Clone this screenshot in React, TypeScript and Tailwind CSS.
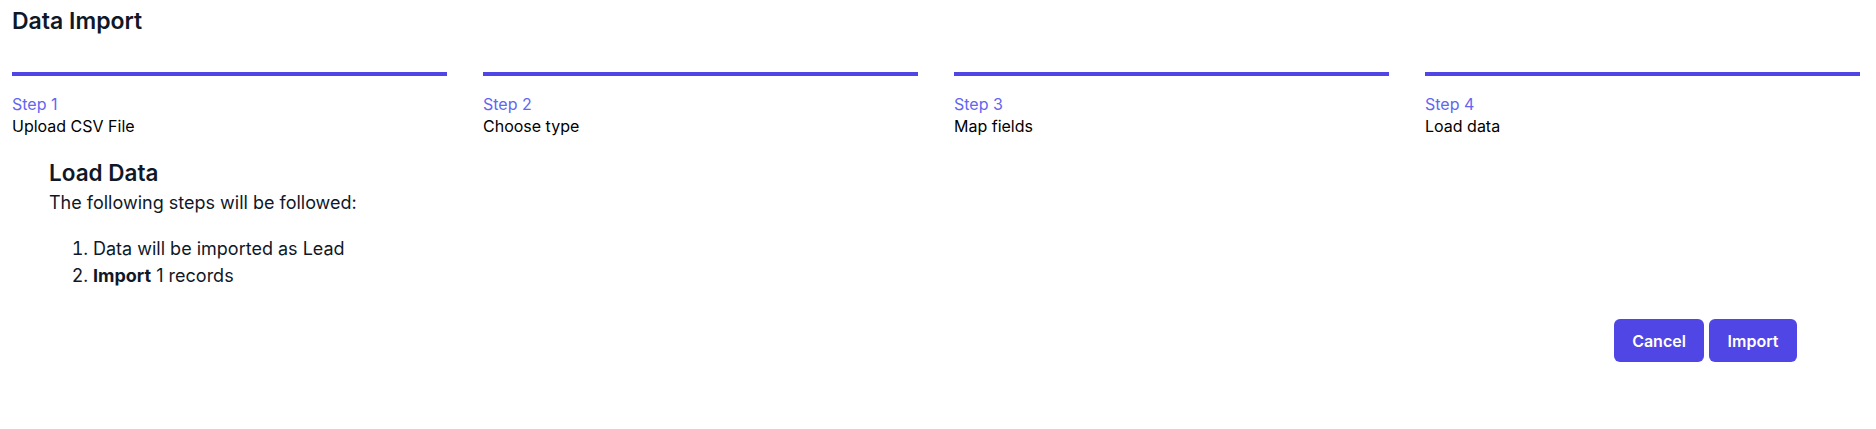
import React from "react";

const steps = [
  { n: "Step 1", label: "Upload CSV File" },
  { n: "Step 2", label: "Choose type" },
  { n: "Step 3", label: "Map fields" },
  { n: "Step 4", label: "Load data" },
];

export default function App() {
  return (
    <div className="w-[1876px] h-[429px] bg-white text-black" style={{ fontFamily: "Inter, 'Noto Sans', sans-serif" }}>
      <div className="pl-3 pr-4">
        <h1 className="pt-[7px] text-[23px] leading-7 font-semibold text-gray-900">Data Import</h1>
        <div className="mt-[37px] flex gap-9">
          {steps.map((s) => (
            <div key={s.n} className="flex-1">
              <div className="h-1 bg-[#4f46e5]" />
              <div className="mt-[17px] text-base leading-[22px] text-[#6366f1]">{s.n}</div>
              <div className="text-base leading-[22px] text-black">{s.label}</div>
            </div>
          ))}
        </div>
        <div className="pl-[37px] mt-[22px]">
          <h2 className="text-[22.5px] leading-7 font-semibold text-gray-900">Load Data</h2>
          <p className="mt-0.5 text-lg leading-7 text-gray-900">The following steps will be followed:</p>
          <ol className="mt-[18px] list-decimal pl-11 text-lg leading-[27px] text-gray-900">
            <li>Data will be imported as Lead</li>
            <li>
              <span className="font-bold">Import</span> 1 records
            </li>
          </ol>
        </div>
        <div className="mt-[30px] flex justify-end gap-[5px] pr-[63px]">
          <button className="h-[43px] w-[90px] rounded-md bg-[#4f46e5] text-base font-semibold text-white">Cancel</button>
          <button className="h-[43px] w-[88px] rounded-md bg-[#4f46e5] text-base font-semibold text-white">Import</button>
        </div>
      </div>
    </div>
  );
}
